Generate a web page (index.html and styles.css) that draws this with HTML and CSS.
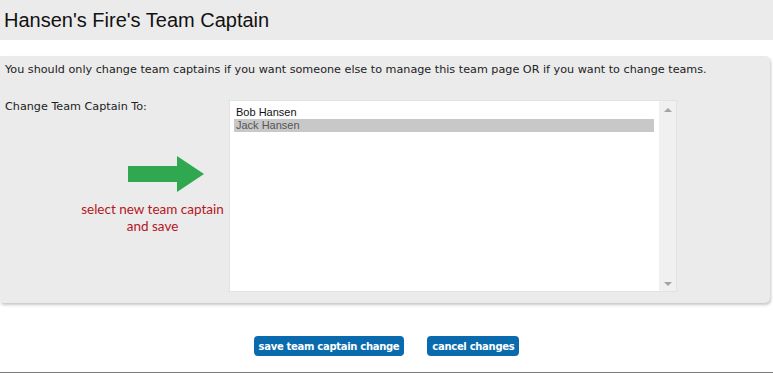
FILE: index.html
```html
<!DOCTYPE html>
<html lang="en">
<head>
    <meta charset="UTF-8">
    <title>Hansen's Fire's Team Captain</title>
    <link rel="stylesheet" href="styles.css">
</head>
<body>

    <div class="page-head">
        <h1>Hansen's Fire's Team Captain</h1>
    </div>

    <div class="panel">
        <p class="intro">You should only change team captains if you want someone else to manage this team page OR if you want to change teams.</p>

        <div class="captain-row">
            <div class="captain-left">
                <div class="label">Change Team Captain To:</div>
                <svg class="arrow" width="76" height="36" viewBox="0 0 76 36">
                    <polygon points="0,10 49,10 49,0 76,18 49,36 49,26 0,26" fill="#2fa84f"/>
                </svg>
                <div class="hint">select new team captain<br>and save</div>
            </div>

            <!-- list of team members -->
            <div class="listbox">
                <div class="options">
                    <div class="option">Bob Hansen</div>
                    <div class="option selected">Jack Hansen</div>
                </div>
                <div class="scrollbar">
                    <span class="up"></span>
                    <span class="down"></span>
                </div>
            </div>
        </div>
    </div>

    <div class="actions">
        <button class="btn btn-save">save team captain change</button>
        <button class="btn btn-cancel">cancel changes</button>
    </div>

    <div class="footer-line"></div>

</body>
</html>
```

FILE: styles.css
```css
body { margin: 0; font-family: "DejaVu Sans", Verdana, sans-serif; font-size: 11px; color: #222; background: #fff; }

.page-head { background: #ebebeb; height: 40px; }
.page-head h1 { margin: 0; padding-left: 4px; font-family: "Liberation Sans", Arial, sans-serif; font-weight: normal; font-size: 20px; line-height: 40px; color: #111; }

.panel { margin: 16px 3px 0 0; background: #ebebeb; border-radius: 0 5px 5px 3px; box-shadow: 1px 2px 3px rgba(0,0,0,0.22); padding: 7px 5px 11px 5px; }
.intro { margin: 0; line-height: 14px; font-size: 11.2px; }

.captain-row { display: flex; margin-top: 23px; }
.captain-left { width: 224px; display: flex; flex-direction: column; }
.label { line-height: 14px; font-size: 11.2px; }
.arrow { display: block; margin: 42px 0 0 123px; }
.hint { margin: 9px 0 0 70px; width: 155px; text-align: center; font-family: Lato, "Open Sans", sans-serif; font-size: 13.5px; line-height: 17px; color: #b5161e; }

.listbox { display: flex; width: 446px; height: 190px; background: #fff; border: 1px solid #e2e2e2; }
.options { flex: 1; padding: 5px 5px 0 4px; }
.option { font-family: "Liberation Sans", Tahoma, sans-serif; font-size: 11px; line-height: 13px; padding-left: 2px; color: #111; }
.option.selected { background: #c8c8c8; color: #555; }

.scrollbar { width: 17px; background: #f0f0f0; display: flex; flex-direction: column; justify-content: space-between; align-items: center; padding: 7px 0 5px 0; }
.scrollbar .up { width: 0; height: 0; border-left: 4px solid transparent; border-right: 4px solid transparent; border-bottom: 4px solid #a3a3a3; }
.scrollbar .down { width: 0; height: 0; border-left: 4px solid transparent; border-right: 4px solid transparent; border-top: 4px solid #a3a3a3; }

.actions { display: flex; justify-content: center; gap: 23px; margin-top: 33px; }
.btn { font-family: "DejaVu Sans", Verdana, sans-serif; font-size: 10px; letter-spacing: -0.3px; font-weight: bold; color: #fff; background: #0a6aae; border: none; border-radius: 4px; height: 20px; padding: 0 5px; cursor: pointer; }
.btn:hover { background: #075a96; }

.footer-line { margin-top: 16px; border-top: 1px solid #7a7a7a; }
```
